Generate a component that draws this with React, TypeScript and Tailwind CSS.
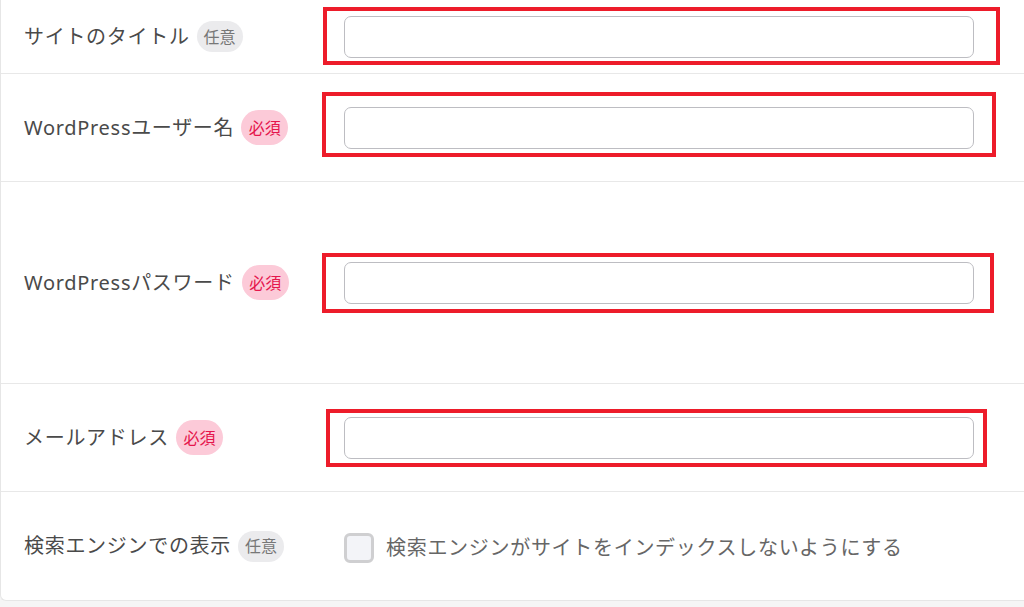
import React from "react";

const font = { fontFamily: '"Noto Sans", "Noto Sans CJK JP", sans-serif' };

function Badge({ required }: { required?: boolean }) {
  return required ? (
    <span className="ml-[7px] inline-flex h-[35px] w-[47px] items-center justify-center rounded-full bg-[#fccad8] text-[16px] tracking-[0px] text-[#e5164d]">
      必須
    </span>
  ) : (
    <span className="ml-[7px] inline-flex h-[31px] w-[46px] items-center justify-center rounded-full bg-[#ebebed] text-[16px] tracking-[0px] text-[#777777]">
      任意
    </span>
  );
}

function Row({
  label,
  required,
  h,
  children,
}: {
  label: string;
  required?: boolean;
  h: string;
  children: React.ReactNode;
}) {
  return (
    <div className={`flex items-center border-b border-[#e8e8e8] ${h}`}>
      <div className="flex w-[343px] shrink-0 items-center pl-[23px] text-[20px] tracking-[0.7px] text-[#4a4a4a]">
        <span>{label}</span>
        <Badge required={required} />
      </div>
      {children}
    </div>
  );
}

function Field() {
  return (
    <div className="h-[42px] w-[630px] rounded-[7px] border border-[#bdbdc2] bg-white" />
  );
}

export default function App() {
  return (
    <div className="relative h-[607px] w-full overflow-hidden bg-[#f5f5f5]" style={font}>
      <div className="w-[1040px] rounded-bl-[6px] border-b border-l border-[#e6e6e6] bg-white">
        <Row label="サイトのタイトル" h="h-[74px]">
          <Field />
        </Row>
        <Row label="WordPressユーザー名" required h="h-[108px]">
          <Field />
        </Row>
        <Row label="WordPressパスワード" required h="h-[202px]">
          <Field />
        </Row>
        <Row label="メールアドレス" required h="h-[108px]">
          <Field />
        </Row>
        <div className="flex h-[108px] items-center">
          <div className="flex w-[343px] shrink-0 items-center pl-[23px] text-[20px] tracking-[0.7px] text-[#4a4a4a]">
            <span>検索エンジンでの表示</span>
            <Badge />
          </div>
          <div className="mt-[4px] flex items-center gap-[12px]">
            <span className="h-[30px] w-[30px] rounded-[6px] border-[3px] border-[#cfcfd1] bg-[#f3f4f8]" />
            <span className="text-[20px] tracking-[0.7px] text-[#666666]">
              検索エンジンがサイトをインデックスしないようにする
            </span>
          </div>
        </div>
      </div>

      {/* red annotation boxes */}
      <div className="pointer-events-none absolute left-[323px] top-[7px] h-[58px] w-[677px] border-[4px] border-[#ed1c2a]" />
      <div className="pointer-events-none absolute left-[322px] top-[92px] h-[65px] w-[674px] border-[4px] border-[#ed1c2a]" />
      <div className="pointer-events-none absolute left-[322px] top-[253px] h-[60px] w-[672px] border-[4px] border-[#ed1c2a]" />
      <div className="pointer-events-none absolute left-[326px] top-[409px] h-[58px] w-[661px] border-[4px] border-[#ed1c2a]" />
    </div>
  );
}
